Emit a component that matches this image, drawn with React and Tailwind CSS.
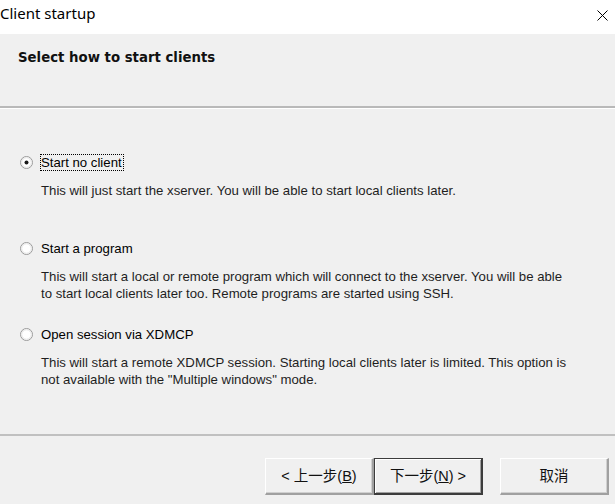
import React from "react";

const sans = { fontFamily: '"Liberation Sans", Arial, sans-serif' };

function Radio({ checked }) {
  return (
    <svg width="13" height="13" viewBox="0 0 13 13" className="shrink-0">
      <circle cx="6.5" cy="6.5" r="6" fill="#ffffff" stroke="#9a9a9a" strokeWidth="1" />
      <circle cx="6.5" cy="6.5" r="4.8" fill="none" stroke="#e3e3e3" strokeWidth="1" />
      {checked && <circle cx="6.5" cy="6.5" r="2" fill="#1a1a1a" />}
    </svg>
  );
}

function Option({ label, checked, focused, children, className }) {
  return (
    <div className={className}>
      <div className="flex items-center h-[17px]">
        <Radio checked={checked} />
        <span
          className={
            "ml-[7px] leading-[15px] pr-[1px] " +
            (focused ? "border border-dotted border-black" : "border border-transparent")
          }
        >
          {label}
        </span>
      </div>
      <div className="ml-[21px] mt-[11px] h-[34px] leading-[17px] text-[#1e1e1e]">{children}</div>
    </div>
  );
}

function Btn({ children, primary }) {
  return (
    <button
      className={
        "w-[109px] h-[37px] pt-[2px] bg-[#f0f0f0] text-[14.5px] text-[#111] flex items-center justify-center " +
        (primary
          ? "border border-[#3c3c3c] border-r-2 border-b-2 shadow-[inset_1px_1px_0_#ffffff,inset_-1px_-1px_0_#a0a0a0]"
          : "border-t border-l border-white border-r-2 border-b-2 border-r-[#a0a0a0] border-b-[#a0a0a0] shadow-[inset_-1px_-1px_0_#d0d0d0]")
      }
      style={{ fontFamily: '"Liberation Sans", "Noto Sans CJK SC", sans-serif' }}
    >
      {children}
    </button>
  );
}

export default function App() {
  return (
    <div className="w-[615px] h-[504px] bg-[#f0f0f0] flex flex-col overflow-hidden text-[13.2px] text-black" style={sans}>
      {/* Barra de título */}
      <div className="h-[34px] bg-white flex items-center justify-between shrink-0">
        <span className="text-[15px] -mt-[7px] text-black" style={{ fontFamily: '"Noto Sans", sans-serif' }}>
          Client startup
        </span>
        <svg width="11" height="11" viewBox="0 0 11 11" className="mr-[7px] -mt-[3px]">
          <path d="M0.5 0.5L10.5 10.5M10.5 0.5L0.5 10.5" stroke="#000" strokeWidth="1" />
        </svg>
      </div>

      {/* Cabecera */}
      <div className="h-[72px] shrink-0 pl-[18px] pt-[14px]">
        <span className="font-bold text-[13.3px] text-[#111]" style={{ fontFamily: '"DejaVu Sans", Verdana, sans-serif' }}>
          Select how to start clients
        </span>
      </div>
      <div className="h-[2px] bg-[#b9b9b9] shrink-0" />
      <div className="h-[1px] bg-white shrink-0" />

      {/* Opciones */}
      <div className="flex-1 pl-[20px] pt-[45px]">
        <Option label="Start no client" checked focused>
          This will just start the xserver. You will be able to start local clients later.
        </Option>
        <Option label="Start a program" className="mt-[24px]">
          This will start a local or remote program which will connect to the xserver. You will be able
          <br />
          to start local clients later too. Remote programs are started using SSH.
        </Option>
        <Option label="Open session via XDMCP" className="mt-[24px]">
          This will start a remote XDMCP session. Starting local clients later is limited. This option is
          <br />
          not available with the "Multiple windows" mode.
        </Option>
      </div>

      <div className="h-[2px] bg-[#c0c0c0] shrink-0" />

      {/* Botones */}
      <div className="h-[68px] shrink-0 flex items-start pt-[22px] pl-[265px]">
        <Btn>
          &lt; 上一步(<span className="underline">B</span>)
        </Btn>
        <Btn primary>
          下一步(<span className="underline">N</span>) &gt;
        </Btn>
        <div className="w-[17px]" />
        <Btn>取消</Btn>
      </div>
    </div>
  );
}
